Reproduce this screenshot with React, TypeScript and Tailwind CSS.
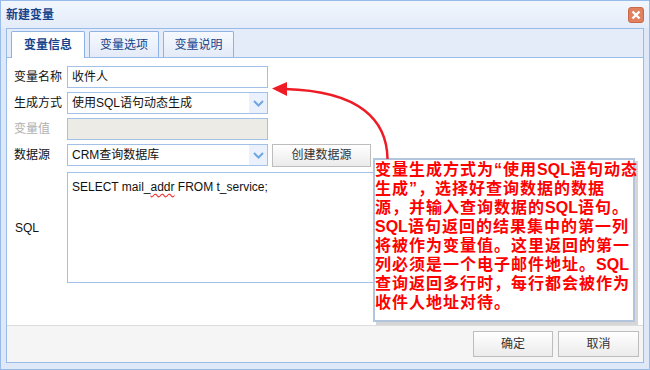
import React from "react";

const FONT = "font-['Liberation_Sans','Noto_Sans_CJK_SC',sans-serif]";

function Chevron() {
  return (
    <svg width="11" height="7" viewBox="0 0 11 7">
      <polyline points="1,1 5.5,5.5 10,1" fill="none" stroke="#6ea7e3" strokeWidth="2" />
    </svg>
  );
}

function Select({ value }: { value: string }) {
  return (
    <div className="w-[201px] h-[22px] border border-[#a3c0e8] bg-white flex items-stretch">
      <div className="flex-1 flex items-center pl-[4px] text-[12px] text-[#111] whitespace-nowrap">{value}</div>
      <div className="w-[18px] bg-[#eaf1fd] flex items-center justify-center">
        <Chevron />
      </div>
    </div>
  );
}

function Btn({ label, w }: { label: string; w: string }) {
  return (
    <div
      className={`${w} h-[23px] border border-[#bdbdbd] bg-gradient-to-b from-[#ffffff] to-[#ebebeb] flex items-center justify-center text-[12px] text-[#333]`}
    >
      {label}
    </div>
  );
}

export default function App() {
  return (
    <div className={`${FONT} relative w-[650px] h-[370px] bg-[#dfe8f6] border border-[#99bbe8] flex flex-col overflow-hidden`}>
      {/* title bar */}
      <div className="h-[27px] shrink-0 flex items-center justify-between pl-[5px] pr-[5px] bg-gradient-to-b from-[#f1f6fe] to-[#e4ecf9]">
        <span className="text-[12px] font-bold text-[#15428b]">新建变量</span>
        <div className="w-[16px] h-[16px] rounded-[3px] bg-[#e0805f] border border-[#c8694a] flex items-center justify-center mt-[1px]">
          <svg width="10" height="10" viewBox="0 0 10 10">
            <path d="M1.5 1.5 L8.5 8.5 M8.5 1.5 L1.5 8.5" stroke="#fff" strokeWidth="2.4" />
          </svg>
        </div>
      </div>

      {/* inner panel */}
      <div className="flex-1 mx-[5px] mb-[6px] border border-[#99bbe8] bg-white flex flex-col">
        {/* tab strip */}
        <div className="h-[29px] shrink-0 bg-[#e5ecf9] border-b border-[#99bbe8] flex items-end pl-[4px] gap-[4px]">
          <div className="w-[74px] h-[27px] -mb-px border border-b-0 border-[#8db2e3] rounded-t-[2px] bg-white flex items-center justify-center text-[12px] font-bold text-[#15428b]">
            变量信息
          </div>
          <div className="w-[70px] h-[26px] border border-b-0 border-[#8db2e3] rounded-t-[2px] bg-gradient-to-b from-[#f6f9fe] to-[#e3ebf8] flex items-center justify-center text-[12px] text-[#15428b]">
            变量选项
          </div>
          <div className="w-[71px] h-[26px] border border-b-0 border-[#8db2e3] rounded-t-[2px] bg-gradient-to-b from-[#f6f9fe] to-[#e3ebf8] flex items-center justify-center text-[12px] text-[#15428b]">
            变量说明
          </div>
        </div>

        {/* form */}
        <div className="flex-1 pt-[8px] pl-[7px] flex flex-col gap-[4px]">
          <div className="flex items-center h-[22px]">
            <div className="w-[53px] text-[12px] text-[#111]">变量名称</div>
            <div className="w-[201px] h-[22px] border border-[#a3c0e8] flex items-center pl-[4px] text-[12px] text-[#111]">
              收件人
            </div>
          </div>
          <div className="flex items-center h-[22px]">
            <div className="w-[53px] text-[12px] text-[#111]">生成方式</div>
            <Select value="使用SQL语句动态生成" />
          </div>
          <div className="flex items-center h-[22px]">
            <div className="w-[53px] text-[12px] text-[#b0b0b0]">变量值</div>
            <div className="w-[201px] h-[22px] border border-[#a3c0e8] bg-[#ecebe6]" />
          </div>
          <div className="flex items-center h-[22px]">
            <div className="w-[53px] text-[12px] text-[#111]">数据源</div>
            <Select value="CRM查询数据库" />
            <div className="ml-[4px]">
              <Btn label="创建数据源" w="w-[99px]" />
            </div>
          </div>
          <div className="flex items-center mt-[2px]">
            <div className="w-[53px] text-[12px] text-[#111] pl-[1px]">SQL</div>
            <div className="w-[330px] h-[111px] border border-[#a3c0e8] pl-[4px] pt-[5px] text-[12px] text-[#111]">
              SELECT mail_<span className="underline decoration-wavy decoration-[#e33] underline-offset-2">addr</span> FROM t_service;
            </div>
          </div>
        </div>

        {/* footer */}
        <div className="h-[37px] shrink-0 border-t border-[#dddddd] bg-[#f5f5f5] flex items-center justify-end gap-[5px] pr-[4px]">
          <Btn label="确定" w="w-[80px] !h-[26px]" />
          <Btn label="取消" w="w-[81px] !h-[26px]" />
        </div>
      </div>

      {/* callout */}
      <div className="absolute left-[372px] top-[157px] w-[262px] h-[164px] bg-white border-2 border-[#b3c5dc] shadow-[3px_3px_0_#d6d6d6]">
        <div className="text-[16px] leading-[19px] font-bold text-[#ff0000] tracking-[1px] whitespace-nowrap">
          <div>变量生成方式为“使用<span className="tracking-[0px]">SQL</span>语句动态</div>
          <div>生成”，选择好查询数据的数据</div>
          <div>源，并输入查询数据的<span className="tracking-[0px]">SQL</span>语句。</div>
          <div><span className="tracking-[0px]">SQL</span>语句返回的结果集中的第一列</div>
          <div>将被作为变量值。这里返回的第一</div>
          <div>列必须是一个电子邮件地址。<span className="tracking-[0px]">SQL</span></div>
          <div>查询返回多行时，每行都会被作为</div>
          <div>收件人地址对待。</div>
        </div>
      </div>

      {/* arrow */}
      <svg className="absolute left-0 top-0 pointer-events-none" width="650" height="370" viewBox="0 0 650 370">
        <path d="M386.5 158 C386 120 360 90 284 88" fill="none" stroke="#ee1c25" strokeWidth="2.5" />
        <polygon points="271,87.5 286,81 286,95" fill="#ee1c25" />
      </svg>
    </div>
  );
}
